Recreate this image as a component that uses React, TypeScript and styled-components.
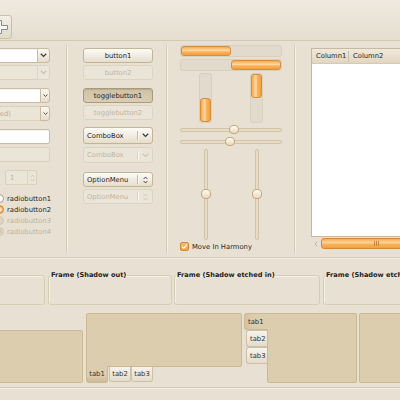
import React from 'react'
import styled, { createGlobalStyle, css } from 'styled-components'

const GlobalStyle = createGlobalStyle`
  html, body { margin: 0; padding: 0; background: #e8e1d3; }
  body {
    font-family: "DejaVu Sans", "Liberation Sans", sans-serif;
    font-size: 6.8px;
    color: #262626;
  }
`

const Window = styled.div`
  width: 400px;
  height: 400px;
  overflow: hidden;
  background: #e8e1d3;
  display: flex;
  flex-direction: column;
`

/* ---------- toolbar ---------- */

const Toolbar = styled.div`
  flex: none;
  height: 41px;
  box-sizing: border-box;
  background: linear-gradient(#efe9df, #e5ded0);
  border-bottom: 1px solid #d3c9b5;
  display: flex;
  align-items: flex-end;
  padding-bottom: 1px;
`

const ToolButton = styled.div`
  width: 26px;
  height: 24px;
  margin-left: -14px;
  box-sizing: border-box;
  border: 1px solid #cbbfa5;
  border-radius: 3px;
  background: linear-gradient(#f4f0e8, #e2d9c8);
  display: flex;
  align-items: center;
  justify-content: center;
`

/* ---------- main area ---------- */

const Main = styled.div`
  flex: none;
  height: 216px;
  box-sizing: border-box;
  padding-top: 7px;
  display: flex;
`

const Column = styled.div<{ $w: number; $ml?: number; $mt?: number }>`
  flex: none;
  width: ${p => p.$w}px;
  margin-left: ${p => p.$ml ?? 0}px;
  margin-top: ${p => p.$mt ?? 0}px;
  display: flex;
  flex-direction: column;
`

const VSep = styled.div<{ $l: number; $r: number }>`
  flex: none;
  width: 1px;
  margin: -3px ${p => p.$r}px 4px ${p => p.$l}px;
  background: #d4cab7;
  border-right: 1px solid #f3efe8;
`

const Group = styled.div<{ $mt?: number; $gap?: number }>`
  display: flex;
  flex-direction: column;
  gap: ${p => p.$gap ?? 2}px;
  margin-top: ${p => p.$mt ?? 0}px;
`

/* entries and combos */

const ComboEntry = styled.div`
  display: flex;
  height: 15px;
`

const EntryField = styled.div<{ $disabled?: boolean; $solo?: boolean }>`
  flex: 1;
  box-sizing: border-box;
  height: 15px;
  padding-left: 3px;
  display: flex;
  align-items: center;
  background: #ffffff;
  border: 1px solid #c9bca2;
  border-right: none;
  border-radius: 2px 0 0 2px;
  box-shadow: inset 0 1px 1px rgba(0, 0, 0, 0.06);
  ${p =>
    p.$disabled &&
    css`
      background: #ebe5d8;
      border-color: #dad0bd;
      color: #b9ae97;
      box-shadow: none;
    `}
  ${p =>
    p.$solo &&
    css`
      flex: none;
      border-right: 1px solid ${p.$disabled ? '#dad0bd' : '#c9bca2'};
      border-radius: 2px;
    `}
`

const DropButton = styled.div<{ $w: number; $disabled?: boolean }>`
  flex: none;
  width: ${p => p.$w}px;
  box-sizing: border-box;
  border: 1px solid #c9bb9e;
  border-radius: 0 3px 3px 0;
  background: linear-gradient(#fbf9f4, #e6ddcc);
  display: flex;
  align-items: center;
  justify-content: center;
  ${p =>
    p.$disabled &&
    css`
      border-color: #ddd4c2;
      background: #ece6da;
    `}
`

const Spin = styled.div`
  margin-left: 32px;
  width: 32px;
  height: 15px;
  box-sizing: border-box;
  border: 1px solid #dad0bd;
  border-radius: 2px;
  background: #ebe5d8;
  color: #bdb29c;
  display: flex;
  align-items: center;
  padding-left: 4px;
`

const SpinArrows = styled.div`
  margin-left: auto;
  width: 8px;
  height: 100%;
  border-left: 1px solid #ddd4c2;
  display: flex;
  align-items: center;
  justify-content: center;
`

const RadioRow = styled.label<{ $disabled?: boolean }>`
  display: flex;
  align-items: center;
  gap: 3px;
  height: 11px;
  margin-left: 22px;
  color: ${p => (p.$disabled ? '#bdb29c' : '#262626')};
`

const RadioDot = styled.span<{ $checked?: boolean; $disabled?: boolean }>`
  flex: none;
  width: 9px;
  height: 9px;
  box-sizing: border-box;
  border-radius: 50%;
  border: 1px solid #a79a80;
  background: #ffffff;
  display: flex;
  align-items: center;
  justify-content: center;
  ${p =>
    p.$checked &&
    css`
      border-color: #d38728;
      background: radial-gradient(#fde4c0 30%, #f6a94b 70%);
    `}
  ${p =>
    p.$disabled &&
    css`
      border-color: #d2c7b1;
      background: #ddd4c2;
    `}
  &::after {
    content: '';
    width: 3px;
    height: 3px;
    border-radius: 50%;
    background: ${p => (p.$checked && p.$disabled ? '#c7bca6' : 'transparent')};
  }
`

/* buttons */

const Button = styled.div<{ $state?: 'normal' | 'disabled' | 'pressed'; $h?: number }>`
  height: ${p => p.$h ?? 15}px;
  box-sizing: border-box;
  border-radius: 3px;
  border: 1px solid #c4b595;
  background: linear-gradient(#fdfbf8, #e6ddcc);
  display: flex;
  align-items: center;
  justify-content: center;
  color: #1e1e1e;
  ${p =>
    p.$state === 'disabled' &&
    css`
      border-color: #ddd3c1;
      background: #ebe5d9;
      color: #bfb49d;
    `}
  ${p =>
    p.$state === 'pressed' &&
    css`
      border-color: #a99a7c;
      background: linear-gradient(#cfc2a6, #d9cdb4);
      box-shadow: inset 0 1px 1px rgba(0, 0, 0, 0.12);
    `}
`

const ComboButton = styled(Button)`
  justify-content: flex-start;
  padding-left: 3px;
`

const ComboLabel = styled.span`
  flex: 1;
`

const ComboDivider = styled.span<{ $disabled?: boolean }>`
  width: 1px;
  height: 9px;
  background: ${p => (p.$disabled ? '#ddd4c3' : '#c7b99d')};
  border-right: 1px solid #faf7f1;
`

const ComboArrow = styled.span`
  width: 13px;
  display: flex;
  align-items: center;
  justify-content: center;
`

/* progress and scales */

const Trough = styled.div<{ $reverse?: boolean; $mt?: number }>`
  height: 12px;
  margin-top: ${p => p.$mt ?? 0}px;
  box-sizing: border-box;
  border: 1px solid #d8cfbd;
  border-radius: 3px;
  background: #e2dbcd;
  display: flex;
  justify-content: ${p => (p.$reverse ? 'flex-end' : 'flex-start')};
`

const Fill = styled.div`
  width: 50%;
  box-sizing: border-box;
  border: 1px solid #d58e3a;
  border-radius: 3px;
  background: linear-gradient(#f7ab4e, #fdd9a6 45%, #f8b35e 60%, #f4a03b);
`

const Pair = styled.div<{ $h: number; $mt: number }>`
  display: grid;
  grid-template-columns: 1fr 1fr;
  justify-items: center;
  height: ${p => p.$h}px;
  margin-top: ${p => p.$mt}px;
`

const VTrough = styled.div<{ $reverse?: boolean }>`
  width: 13px;
  height: 100%;
  box-sizing: border-box;
  border: 1px solid #d8cfbd;
  border-radius: 3px;
  background: #e2dbcd;
  display: flex;
  flex-direction: column;
  justify-content: ${p => (p.$reverse ? 'flex-start' : 'flex-end')};
`

const VFill = styled.div`
  height: 50%;
  box-sizing: border-box;
  border: 1px solid #d58e3a;
  border-radius: 3px;
  background: linear-gradient(90deg, #f7ab4e, #fdd9a6 45%, #f8b35e 60%, #f4a03b);
`

const HScale = styled.div<{ $mt: number }>`
  position: relative;
  height: 9px;
  margin-top: ${p => p.$mt}px;
  display: flex;
  align-items: center;
  &::before {
    content: '';
    flex: 1;
    height: 4px;
    box-sizing: border-box;
    border: 1px solid #d2c3a6;
    border-radius: 2px;
    background: #e8dcc4;
  }
`

const Knob = styled.span<{ $vertical?: boolean }>`
  position: absolute;
  width: 10px;
  height: ${p => (p.$vertical ? 10 : 9)}px;
  box-sizing: border-box;
  border: 1px solid #c4a97c;
  border-radius: 4px;
  background: linear-gradient(#fefbf5, #ead9bb);
`

const VScale = styled.div`
  position: relative;
  height: 100%;
  width: 10px;
  display: flex;
  justify-content: center;
  &::before {
    content: '';
    width: 4px;
    height: 100%;
    box-sizing: border-box;
    border: 1px solid #d2c3a6;
    border-radius: 2px;
    background: #e8dcc4;
  }
`

const CheckRow = styled.label`
  display: flex;
  align-items: center;
  gap: 3px;
  margin-top: 2px;
  height: 9px;
`

const CheckBox = styled.span`
  width: 9px;
  height: 9px;
  box-sizing: border-box;
  border: 1px solid #d08a36;
  border-radius: 2px;
  background: linear-gradient(#f9bd70, #f3a040);
  display: flex;
  align-items: center;
  justify-content: center;
`

/* tree view */

const Tree = styled.div`
  width: 120px;
  display: flex;
  flex-direction: column;
`

const TreeFrame = styled.div`
  height: 189px;
  box-sizing: border-box;
  border: 1px solid #c6b99f;
  background: #ffffff;
  display: flex;
  flex-direction: column;
`

const TreeHeader = styled.div`
  height: 15px;
  box-sizing: border-box;
  display: flex;
  align-items: center;
  background: linear-gradient(#f0e9dc, #e1d6c1);
  border-bottom: 1px solid #d6cab3;
`

const HeaderCell = styled.div<{ $w?: number }>`
  width: ${p => (p.$w ? `${p.$w}px` : 'auto')};
  box-sizing: border-box;
  padding-left: 4px;
  height: 11px;
  display: flex;
  align-items: center;
  border-right: ${p => (p.$w ? '1px solid #cdbfa5' : 'none')};
`

const ScrollBar = styled.div`
  height: 11px;
  margin-top: 1px;
  display: flex;
  align-items: stretch;
`

const ScrollArrow = styled.div`
  width: 10px;
  display: flex;
  align-items: center;
  justify-content: center;
`

const ScrollThumb = styled.div`
  flex: 1;
  box-sizing: border-box;
  border: 1px solid #d38b36;
  border-radius: 3px;
  background: linear-gradient(#f7ab4e, #fdd3a0 40%, #f8b25c 60%, #f4a03b);
  display: flex;
  align-items: center;
  padding-left: 52px;
`

const Grip = styled.span`
  width: 5px;
  height: 5px;
  background: repeating-linear-gradient(90deg, #c6843a 0 1px, transparent 1px 2px);
`

/* separators and bottom rows */

const HSep = styled.div`
  flex: none;
  height: 1px;
  background: #d4cab7;
  border-bottom: 1px solid #f3efe8;
`

const FrameRow = styled.div`
  flex: none;
  display: flex;
  gap: 2px;
  margin-top: 12px;
  height: 34px;
`

const Frame = styled.fieldset<{ $w: number; $ml?: number }>`
  flex: none;
  width: ${p => p.$w}px;
  margin: 0 0 0 ${p => p.$ml ?? 0}px;
  padding: 0;
  box-sizing: border-box;
  height: 34px;
  border: 1px solid #d6ccb8;
  border-radius: 3px;
  box-shadow: inset 1px 1px 0 #f4f0e8;
`

const FrameLabel = styled.legend`
  font-weight: bold;
  font-size: 6.6px;
  padding: 0 1px;
  margin-left: 1px;
  line-height: 8px;
  color: #222;
`

const NotebookRow = styled.div`
  flex: none;
  display: flex;
  gap: 2px;
  margin-top: 8px;
  height: 70px;
`

const Notebook = styled.div<{ $w: number; $ml?: number; $dir: 'column' | 'row' }>`
  flex: none;
  width: ${p => p.$w}px;
  margin-left: ${p => p.$ml ?? 0}px;
  display: flex;
  flex-direction: ${p => p.$dir};
`

const Panel = styled.div<{ $h?: number }>`
  flex: ${p => (p.$h ? 'none' : '1')};
  ${p => p.$h && `height: ${p.$h}px;`}
  box-sizing: border-box;
  border: 1px solid #cbb993;
  border-radius: 2px;
  background: #dccdaf;
`

const TabStrip = styled.div<{ $vertical?: boolean; $size: number }>`
  flex: none;
  display: flex;
  flex-direction: ${p => (p.$vertical ? 'column' : 'row')};
  ${p => (p.$vertical ? `width: ${p.$size}px;` : `height: ${p.$size}px;`)}
`

const Tab = styled.div<{ $active?: boolean; $side: 'bottom' | 'left'; $ml?: number }>`
  box-sizing: border-box;
  display: flex;
  align-items: center;
  justify-content: center;
  color: #333;
  border: 1px solid #cfc1a5;
  background: linear-gradient(#f7f4ee, #e4dccb);
  ${p =>
    p.$side === 'bottom'
      ? css`
          width: 22px;
          height: ${p.$active ? 17 : 15}px;
          margin-top: ${p.$active ? -1 : 0}px;
          margin-left: ${p.$ml ?? 0}px;
          border-top: none;
          border-radius: 0 0 3px 3px;
        `
      : css`
          height: 17px;
          width: ${p.$active ? 24 : 21}px;
          margin-left: ${p.$active ? 0 : 2}px;
          margin-right: ${p.$active ? -1 : 0}px;
          border-right: none;
          border-radius: 3px 0 0 3px;
          justify-content: flex-start;
          padding-left: 3px;
        `}
  ${p =>
    p.$active &&
    css`
      background: linear-gradient(${p.$side === 'bottom' ? '#dccdaf 60%, #cdbb98' : '90deg, #d3c2a2, #dccdaf 40%'});
      border-color: #cbb993;
      z-index: 1;
    `}
`

const BottomLine = styled.div`
  flex: none;
  margin-top: 4px;
  height: 1px;
  background: #d4cab7;
  border-bottom: 1px solid #f3efe8;
`

/* ---------- icons ---------- */

const Chevron = ({ w = 7, color = '#3a3a3a' }: { w?: number; color?: string }) => (
  <svg width={w} height={w * 0.6} viewBox="0 0 7 4.2">
    <polyline points="0.8,0.8 3.5,3.4 6.2,0.8" fill="none" stroke={color} strokeWidth="1.2" />
  </svg>
)

const UpDown = ({ color = '#3a3a3a' }: { color?: string }) => (
  <svg width="5" height="8" viewBox="0 0 5 8">
    <polyline points="0.6,3 2.5,1 4.4,3" fill="none" stroke={color} strokeWidth="0.9" />
    <polyline points="0.6,5 2.5,7 4.4,5" fill="none" stroke={color} strokeWidth="0.9" />
  </svg>
)

const PlusIcon = () => (
  <svg width="20" height="16" viewBox="0 0 20 16">
    <path
      d="M7.5 1.5h5v5h6v4h-6v4h-5v-4h-6v-4h6z"
      fill="#f7f7f5"
      stroke="#8a8a86"
      strokeWidth="1"
    />
  </svg>
)

const CheckMark = () => (
  <svg width="7" height="7" viewBox="0 0 7 7">
    <path d="M1 3.6l1.8 1.8L6 1.6" fill="none" stroke="#fff" strokeWidth="1.3" />
  </svg>
)

const LeftArrow = () => (
  <svg width="4" height="6" viewBox="0 0 4 6">
    <polyline points="3.3,0.6 0.9,3 3.3,5.4" fill="none" stroke="#b8ad98" strokeWidth="0.9" />
  </svg>
)

/* ---------- page ---------- */

export default function App() {
  return (
    <Window>
      <GlobalStyle />
      <Toolbar>
        <ToolButton>
          <PlusIcon />
        </ToolButton>
      </Toolbar>

      <Main>
        <Column $w={77} $ml={-27}>
          <Group>
            <ComboEntry>
              <EntryField />
              <DropButton $w={13}>
                <Chevron />
              </DropButton>
            </ComboEntry>
            <ComboEntry>
              <EntryField $disabled />
              <DropButton $w={13} $disabled>
                <Chevron color="#c9bfab" />
              </DropButton>
            </ComboEntry>
          </Group>
          <Group $mt={8} $gap={3}>
            <ComboEntry>
              <EntryField />
              <DropButton $w={10}>
                <Chevron w={5} />
              </DropButton>
            </ComboEntry>
            <ComboEntry>
              <EntryField $disabled>(disabled)</EntryField>
              <DropButton $w={10}>
                <Chevron w={5} />
              </DropButton>
            </ComboEntry>
          </Group>
          <Group $mt={8} $gap={3}>
            <EntryField $solo />
            <EntryField $solo $disabled />
          </Group>
          <Group $mt={8}>
            <Spin>
              1
              <SpinArrows>
                <UpDown color="#cdc3b0" />
              </SpinArrows>
            </Spin>
          </Group>
          <Group $mt={8} $gap={0}>
            <RadioRow>
              <RadioDot />
              radiobutton1
            </RadioRow>
            <RadioRow>
              <RadioDot $checked />
              radiobutton2
            </RadioRow>
            <RadioRow $disabled>
              <RadioDot $disabled />
              radiobutton3
            </RadioRow>
            <RadioRow $disabled>
              <RadioDot $disabled $checked />
              radiobutton4
            </RadioRow>
          </Group>
        </Column>

        <VSep $l={16} $r={15} />

        <Column $w={70}>
          <Group>
            <Button>button1</Button>
            <Button $state="disabled">button2</Button>
          </Group>
          <Group $mt={8}>
            <Button $state="pressed">togglebutton1</Button>
            <Button $state="disabled">togglebutton2</Button>
          </Group>
          <Group $mt={7} $gap={3}>
            <ComboButton $h={17}>
              <ComboLabel>ComboBox</ComboLabel>
              <ComboDivider />
              <ComboArrow>
                <Chevron />
              </ComboArrow>
            </ComboButton>
            <ComboButton $h={16} $state="disabled">
              <ComboLabel>ComboBox</ComboLabel>
              <ComboDivider $disabled />
              <ComboArrow>
                <Chevron color="#cfc5b2" />
              </ComboArrow>
            </ComboButton>
          </Group>
          <Group $mt={9}>
            <ComboButton>
              <ComboLabel>OptionMenu</ComboLabel>
              <ComboDivider />
              <ComboArrow>
                <UpDown />
              </ComboArrow>
            </ComboButton>
            <ComboButton $state="disabled">
              <ComboLabel>OptionMenu</ComboLabel>
              <ComboDivider $disabled />
              <ComboArrow>
                <UpDown color="#cfc5b2" />
              </ComboArrow>
            </ComboButton>
          </Group>
        </Column>

        <VSep $l={13} $r={12} />

        <Column $w={102} $mt={-3}>
          <Trough>
            <Fill />
          </Trough>
          <Trough $reverse $mt={2}>
            <Fill />
          </Trough>
          <Pair $h={50} $mt={2}>
            <VTrough>
              <VFill />
            </VTrough>
            <VTrough $reverse>
              <VFill />
            </VTrough>
          </Pair>
          <HScale $mt={2}>
            <Knob style={{ left: '48%' }} />
          </HScale>
          <HScale $mt={3}>
            <Knob style={{ left: '44%' }} />
          </HScale>
          <Pair $h={91} $mt={3}>
            <VScale>
              <Knob $vertical style={{ top: 40 }} />
            </VScale>
            <VScale>
              <Knob $vertical style={{ top: 40 }} />
            </VScale>
          </Pair>
          <CheckRow>
            <CheckBox>
              <CheckMark />
            </CheckBox>
            Move In Harmony
          </CheckRow>
        </Column>

        <VSep $l={12} $r={15} />

        <Column $w={120}>
          <Tree>
            <TreeFrame>
              <TreeHeader>
                <HeaderCell $w={37}>Column1</HeaderCell>
                <HeaderCell>Column2</HeaderCell>
              </TreeHeader>
            </TreeFrame>
            <ScrollBar>
              <ScrollArrow>
                <LeftArrow />
              </ScrollArrow>
              <ScrollThumb>
                <Grip />
              </ScrollThumb>
            </ScrollBar>
          </Tree>
        </Column>
      </Main>

      <HSep />

      <FrameRow>
        <Frame $w={165} $ml={-120}>
          <FrameLabel>Frame (Shadow in)</FrameLabel>
        </Frame>
        <Frame $w={124} $ml={1}>
          <FrameLabel>Frame (Shadow out)</FrameLabel>
        </Frame>
        <Frame $w={146}>
          <FrameLabel>Frame (Shadow etched in)</FrameLabel>
        </Frame>
        <Frame $w={140} $ml={1}>
          <FrameLabel>Frame (Shadow etched out)</FrameLabel>
        </Frame>
      </FrameRow>

      <NotebookRow>
        <Notebook $w={200} $ml={-117} $dir="column">
          <TabStrip $size={17} />
          <Panel />
        </Notebook>
        <Notebook $w={156} $ml={1} $dir="column">
          <Panel $h={54} />
          <TabStrip $size={17}>
            <Tab $side="bottom" $active>
              tab1
            </Tab>
            <Tab $side="bottom" $ml={1}>
              tab2
            </Tab>
            <Tab $side="bottom">tab3</Tab>
          </TabStrip>
        </Notebook>
        <Notebook $w={113} $dir="row">
          <TabStrip $vertical $size={23}>
            <Tab $side="left" $active>
              tab1
            </Tab>
            <Tab $side="left">tab2</Tab>
            <Tab $side="left">tab3</Tab>
          </TabStrip>
          <Panel />
        </Notebook>
        <Notebook $w={120} $dir="row">
          <Panel />
        </Notebook>
      </NotebookRow>

      <BottomLine />
    </Window>
  )
}
